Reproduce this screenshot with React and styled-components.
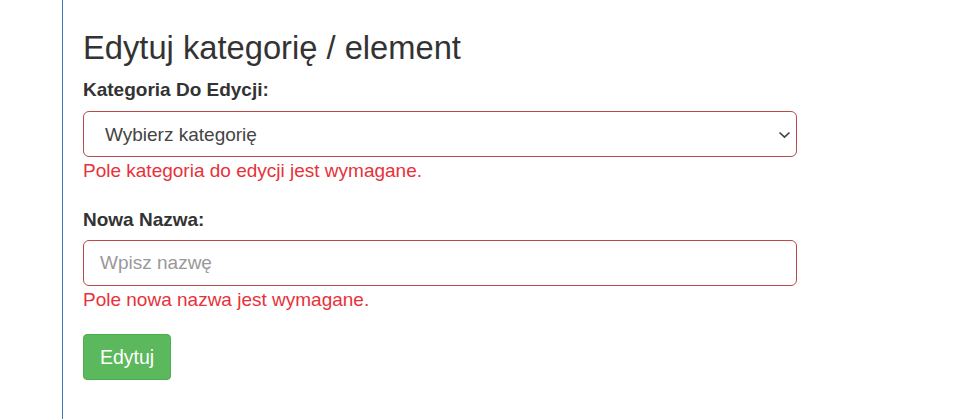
import React from 'react';
import styled, { createGlobalStyle } from 'styled-components';

const GlobalStyle = createGlobalStyle`
  html, body {
    margin: 0;
    padding: 0;
    background: #fff;
  }
  body {
    font-family: "Liberation Sans", Arial, sans-serif;
    color: #333;
  }
`;

const Page = styled.div`
  display: flex;
  min-height: 419px;
`;

const Gutter = styled.div`
  width: 62px;
  flex-shrink: 0;
`;

const Panel = styled.div`
  border-left: 1px solid #337ab7;
  padding: 30px 20px 0 20px;
  width: 714px;
`;

const Title = styled.h2`
  margin: 0 0 11px 0;
  font-size: 32.7px;
  font-weight: 400;
  line-height: 36px;
  color: #333;
`;

const Field = styled.div`
  margin-bottom: ${(p) => p.$gap || 0}px;
`;

const Label = styled.label`
  display: block;
  font-size: 19px;
  font-weight: 700;
  line-height: 26px;
  margin-bottom: ${(p) => p.$space || 8}px;
  color: #333;
`;

const SelectWrap = styled.div`
  position: relative;
`;

const Select = styled.select`
  display: block;
  box-sizing: border-box;
  width: 100%;
  height: 46px;
  padding: 0 21px;
  font-family: inherit;
  font-size: 19px;
  color: #444;
  background: #fff;
  border: 1px solid #b94a48;
  border-radius: 6px;
  appearance: none;
  outline: none;
`;

const Chevron = styled.svg`
  position: absolute;
  right: 6px;
  top: 20px;
  pointer-events: none;
`;

const Input = styled.input`
  display: block;
  box-sizing: border-box;
  width: 100%;
  height: 46px;
  padding: 0 16px;
  font-family: inherit;
  font-size: 19px;
  color: #444;
  background: #fff;
  border: 1px solid #b94a48;
  border-radius: 6px;
  outline: none;
  &::placeholder {
    color: #999;
  }
`;

const ErrorText = styled.div`
  margin-top: 1px;
  font-size: 19px;
  line-height: 26px;
  color: #e8313a;
`;

const Button = styled.button`
  box-sizing: border-box;
  height: 46px;
  padding: 0 16px;
  font-family: inherit;
  font-size: 19.5px;
  color: #fff;
  background: #5cb85c;
  border: 1px solid #4cae4c;
  border-radius: 4px;
  cursor: pointer;
`;

export default function App() {
  return (
    <>
      <GlobalStyle />
      <Page>
        <Gutter />
        <Panel>
          <Title>Edytuj kategorię / element</Title>
          <Field $gap={23}>
            <Label>Kategoria Do Edycji:</Label>
            <SelectWrap>
              <Select defaultValue="">
                <option value="">Wybierz kategorię</option>
              </Select>
              <Chevron width="13" height="8" viewBox="0 0 13 8">
                <path d="M1.5 1.5 L6.5 6.2 L11.5 1.5" fill="none" stroke="#444" strokeWidth="1.7" />
              </Chevron>
            </SelectWrap>
            <ErrorText>Pole kategoria do edycji jest wymagane.</ErrorText>
          </Field>
          <Field $gap={21}>
            <Label $space={7}>Nowa Nazwa:</Label>
            <Input placeholder="Wpisz nazwę" />
            <ErrorText>Pole nowa nazwa jest wymagane.</ErrorText>
          </Field>
          <Button>Edytuj</Button>
        </Panel>
      </Page>
    </>
  );
}
